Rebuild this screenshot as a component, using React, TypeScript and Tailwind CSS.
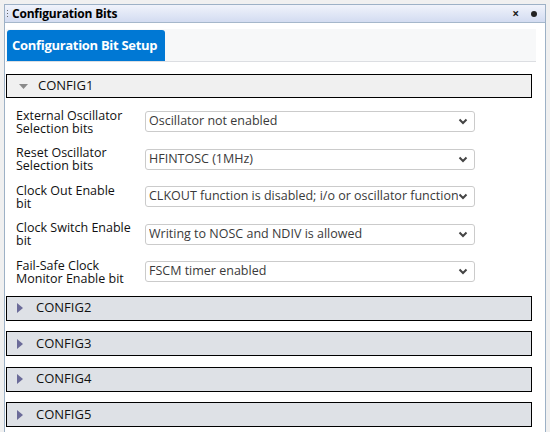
import * as React from "react";

const rows = [
  { label: ["External Oscillator", "Selection bits"], value: "Oscillator not enabled" },
  { label: ["Reset Oscillator", "Selection bits"], value: "HFINTOSC (1MHz)" },
  { label: ["Clock Out Enable", "bit"], value: "CLKOUT function is disabled; i/o or oscillator function on OSC2" },
  { label: ["Clock Switch Enable", "bit"], value: "Writing to NOSC and NDIV is allowed" },
  { label: ["Fail-Safe Clock", "Monitor Enable bit"], value: "FSCM timer enabled" },
];

const Chevron = () => (
  <svg width="10" height="7" viewBox="0 0 10 7" className="shrink-0">
    <path d="M1.5 1.5 L5 5 L8.5 1.5" fill="none" stroke="#444" strokeWidth="2" />
  </svg>
);

const Collapsed = ({ name }: { name: string }) => (
  <div className="h-[25px] w-[526px] border border-black bg-[#dee1e6] flex items-center">
    <svg width="6" height="10" viewBox="0 0 6 10" className="ml-[10px]">
      <path d="M0 0 L6 5 L0 10 Z" fill="#6b6b99" />
    </svg>
    <span className="ml-[13px] text-[13px] text-[#111]">{name}</span>
  </div>
);

export default function App() {
  return (
    <div className="w-[550px] h-[432px] bg-[#f0f0f0] pt-[4px] pl-[4px] overflow-hidden font-['Segoe_UI','Open_Sans',sans-serif]">
      <div className="w-[542px] h-[428px] border border-b-0 border-[#9db1c6] bg-white flex flex-col">
        {/* title bar */}
        <div className="h-[18px] shrink-0 bg-gradient-to-b from-[#f0f3fb] to-[#d3dcf1] border-b border-[#a5b7cb] flex items-center">
          <div className="ml-[2px] flex flex-col gap-[2px]">
            <span className="w-[1px] h-[1px] bg-[#666]" />
            <span className="w-[1px] h-[1px] bg-[#666]" />
            <span className="w-[1px] h-[1px] bg-[#666]" />
          </div>
          <span className="ml-[4px] text-[12px] font-bold text-black leading-none tracking-[-0.2px]">Configuration Bits</span>
          <span className="ml-auto text-[12px] font-bold text-[#222] leading-none">×</span>
          <span className="ml-[12px] mr-[8px] w-[6px] h-[6px] rounded-full bg-[#222]" />
        </div>

        <div className="pl-[1px] pt-[6px] flex flex-col">
          {/* tab strip */}
          <div className="w-[530px] h-[33px] bg-[#f7f8f9] border-b border-[#dcdee2] pt-[1px] pl-[1px] flex">
            <div className="h-[31px] w-[158px] bg-[#0078d4] rounded-t-[3px] flex items-center pl-[5px]">
              <span className="text-[13px] font-bold text-white tracking-[-0.3px]">Configuration Bit Setup</span>
            </div>
          </div>

          {/* CONFIG1 expanded */}
          <div className="mt-[12px] h-[24px] w-[526px] border border-black bg-[#f0f0f0] flex items-center">
            <svg width="9" height="5" viewBox="0 0 9 5" className="ml-[12px]">
              <path d="M0 0 L9 0 L4.5 5 Z" fill="#8a8a8a" />
            </svg>
            <span className="ml-[10px] text-[13px] text-[#111]">CONFIG1</span>
          </div>

          <div className="pt-[5px] flex flex-col">
            {rows.map((r) => (
              <div key={r.value} className="h-[37.5px] flex items-center">
                <div className="w-[139px] pl-[10px] pr-[2px] text-[12.5px] leading-[13px] text-[#111] whitespace-nowrap">
                  <div>{r.label[0]}</div>
                  <div>{r.label[1]}</div>
                </div>
                <div className="w-[330px] h-[21px] border border-[#cbcbcb] rounded-[3px] bg-white flex items-center pl-[3px] pr-[6px]">
                  <span className="flex-1 overflow-hidden whitespace-nowrap text-[12.5px] text-[#3a3a3a]">{r.value}</span>
                  <Chevron />
                </div>
              </div>
            ))}
          </div>

          <div className="mt-[5px] flex flex-col gap-[10.5px]">
            <Collapsed name="CONFIG2" />
            <Collapsed name="CONFIG3" />
            <Collapsed name="CONFIG4" />
            <Collapsed name="CONFIG5" />
          </div>
        </div>
      </div>
    </div>
  );
}
